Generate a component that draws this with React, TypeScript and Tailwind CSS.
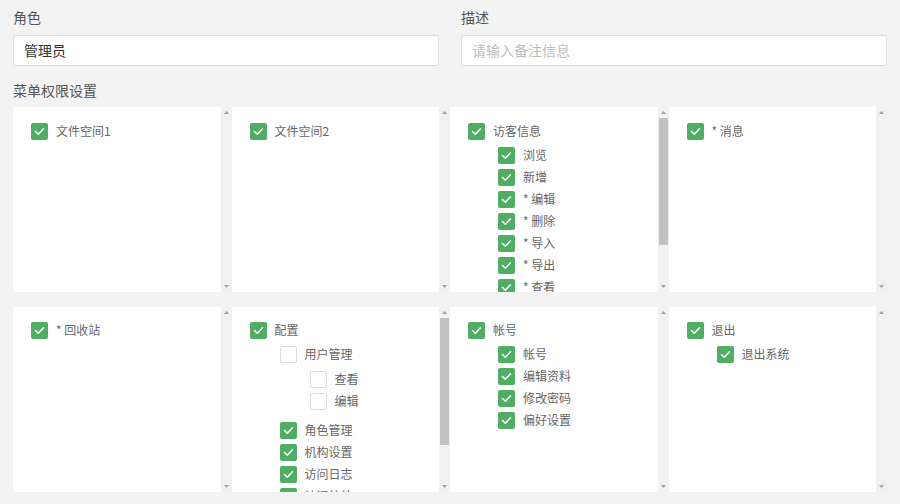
import React from "react";

type Node = { label: string; checked: boolean; children?: Node[]; mt?: number };

const font = { fontFamily: '"Noto Sans CJK SC", "Noto Sans", sans-serif' };

function Box({ checked }: { checked: boolean }) {
  if (checked) {
    return (
      <span className="flex h-[17px] w-[17px] shrink-0 items-center justify-center rounded-[2px] bg-[#4fae63]">
        <svg width="11" height="9" viewBox="0 0 11 9" fill="none">
          <path d="M1.5 4.5 L4.3 7.2 L9.5 1.8" stroke="white" strokeWidth="1.5" strokeLinecap="round" strokeLinejoin="round" />
        </svg>
      </span>
    );
  }
  return <span className="h-[17px] w-[17px] shrink-0 rounded-[2px] border border-[#dcdcdc] bg-white" />;
}

function Tree({ nodes }: { nodes: Node[] }) {
  return (
    <div className="flex flex-col">
      {nodes.map((n, i) => (
        <div key={i} className={n.mt === 7 ? "mt-[7px]" : n.mt === 3 ? "mt-[3px]" : ""}>
          <div className="flex h-[22px] items-center gap-[8px]">
            <Box checked={n.checked} />
            <span className="whitespace-nowrap text-[12px] leading-none text-[#666]">{n.label}</span>
          </div>
          {n.children && (
            <div className={"pl-[30px] " + (n.children[0]?.mt === 3 ? "" : "mt-[2px]")}>
              <Tree nodes={n.children} />
            </div>
          )}
        </div>
      ))}
    </div>
  );
}

function Arrow({ down }: { down?: boolean }) {
  return (
    <svg width="5" height="3" viewBox="0 0 5 3">
      <path d={down ? "M0 0 L5 0 L2.5 3 Z" : "M0 3 L5 3 L2.5 0 Z"} fill="#a3a3a3" />
    </svg>
  );
}

function Card({ nodes, thumb, second }: { nodes: Node[]; thumb?: boolean; second?: boolean }) {
  return (
    <div className="flex h-[185px]">
      <div className={"flex-1 overflow-hidden bg-white pl-[18px] " + (second ? "pt-[12px]" : "pt-[13px]")}>
        <Tree nodes={nodes} />
      </div>
      <div className="flex w-[11px] flex-col items-center bg-[#f1f1f1] py-[4px]">
        <Arrow />
        <div className="mt-[4px] flex-1 self-stretch">
          {thumb && <div className="mx-[1px] h-[127px] bg-[#c1c1c1]" />}
        </div>
        <Arrow down />
      </div>
    </div>
  );
}

export default function App() {
  const row1: { nodes: Node[]; thumb?: boolean }[] = [
    { nodes: [{ label: "文件空间1", checked: true }] },
    { nodes: [{ label: "文件空间2", checked: true }] },
    {
      thumb: true,
      nodes: [
        {
          label: "访客信息",
          checked: true,
          children: [
            { label: "浏览", checked: true },
            { label: "新增", checked: true },
            { label: "* 编辑", checked: true },
            { label: "* 删除", checked: true },
            { label: "* 导入", checked: true },
            { label: "* 导出", checked: true },
            { label: "* 查看", checked: true },
          ],
        },
      ],
    },
    { nodes: [{ label: "* 消息", checked: true }] },
  ];
  const row2: { nodes: Node[]; thumb?: boolean }[] = [
    { nodes: [{ label: "* 回收站", checked: true }] },
    {
      thumb: true,
      nodes: [
        {
          label: "配置",
          checked: true,
          children: [
            {
              label: "用户管理",
              checked: false,
              children: [
                { label: "查看", checked: false, mt: 3 },
                { label: "编辑", checked: false },
              ],
            },
            { label: "角色管理", checked: true, mt: 7 },
            { label: "机构设置", checked: true },
            { label: "访问日志", checked: true },
            { label: "访问统计", checked: true },
          ],
        },
      ],
    },
    {
      nodes: [
        {
          label: "帐号",
          checked: true,
          children: [
            { label: "帐号", checked: true },
            { label: "编辑资料", checked: true },
            { label: "修改密码", checked: true },
            { label: "偏好设置", checked: true },
          ],
        },
      ],
    },
    {
      nodes: [
        {
          label: "退出",
          checked: true,
          children: [{ label: "退出系统", checked: true }],
        },
      ],
    },
  ];

  return (
    <div className="h-[504px] w-[900px] overflow-hidden bg-[#f3f3f3] px-[13px] pt-[7px]" style={font}>
      <div className="grid grid-cols-2 gap-x-[22px]">
        <div>
          <div className="h-5 text-[14px] leading-5 text-[#555]">角色</div>
          <div className="mt-[8px] flex h-[31px] items-center rounded-[2px] border border-[#dedede] bg-white px-[10px] text-[14px] text-[#333]">
            管理员
          </div>
        </div>
        <div>
          <div className="h-5 text-[14px] leading-5 text-[#555]">描述</div>
          <div className="mt-[8px] flex h-[31px] items-center rounded-[2px] border border-[#dedede] bg-white px-[10px] text-[14px] text-[#bdbdbd]">
            请输入备注信息
          </div>
        </div>
      </div>
      <div className="mt-[14px] h-5 text-[14px] leading-5 text-[#555]">菜单权限设置</div>
      <div className="mt-[7px] grid grid-cols-4">
        {row1.map((c, i) => (
          <Card key={i} nodes={c.nodes} thumb={c.thumb} />
        ))}
      </div>
      <div className="mt-[15px] grid grid-cols-4">
        {row2.map((c, i) => (
          <Card key={i} nodes={c.nodes} thumb={c.thumb} second />
        ))}
      </div>
    </div>
  );
}
